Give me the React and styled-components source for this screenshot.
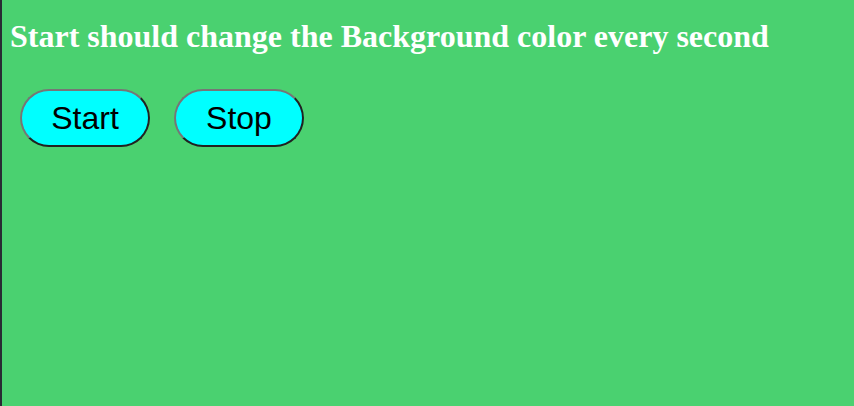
import React, { useEffect, useState } from 'react';
import styled, { createGlobalStyle } from 'styled-components';

const GlobalStyle = createGlobalStyle`
    html, body {
        margin: 0;
        padding: 0;
        height: 100%;
        background-color: #282c34;
    }
    #root {
        height: 100%;
    }
`;

const App = () => {
    const [running, setRunning] = useState(false);

    useEffect(() => {
        if (!running) return;
        const id = setInterval(() => {}, 1000);
        return () => clearInterval(id);
    }, [running]);

    return (
        <>
            <GlobalStyle />
            <StyledPage>
                <StyledTitle>Start should change the Background color every second</StyledTitle>
                <StyledControls>
                    <StyledButton onClick={() => setRunning(true)}>Start</StyledButton>
                    <StyledButton onClick={() => setRunning(false)}>Stop</StyledButton>
                </StyledControls>
            </StyledPage>
        </>
    );
};

const StyledPage = styled.div`
    height: 100%;
    margin-left: 2px;
    padding: 0 8px;
    background-color: #4ad170;
    display: flex;
    flex-direction: column;
    overflow: hidden;
`;

const StyledTitle = styled.h1`
    margin: 18px 0 0;
    font-family: "Liberation Serif", "Times New Roman", serif;
    font-size: 32px;
    font-weight: bold;
    color: #ffffff;
    line-height: 36px;
    white-space: nowrap;
`;

const StyledControls = styled.div`
    display: flex;
    gap: 24px;
    margin-top: 35px;
    padding-left: 10px;
`;

const StyledButton = styled.button`
    width: 130px;
    height: 58px;
    border: 2px outset #767676;
    border-radius: 30px;
    background-color: #00ffff;
    color: #000;
    font-family: "Liberation Sans", Arial, sans-serif;
    font-size: 32px;
    cursor: pointer;
    padding: 0;
`;

export default App;
